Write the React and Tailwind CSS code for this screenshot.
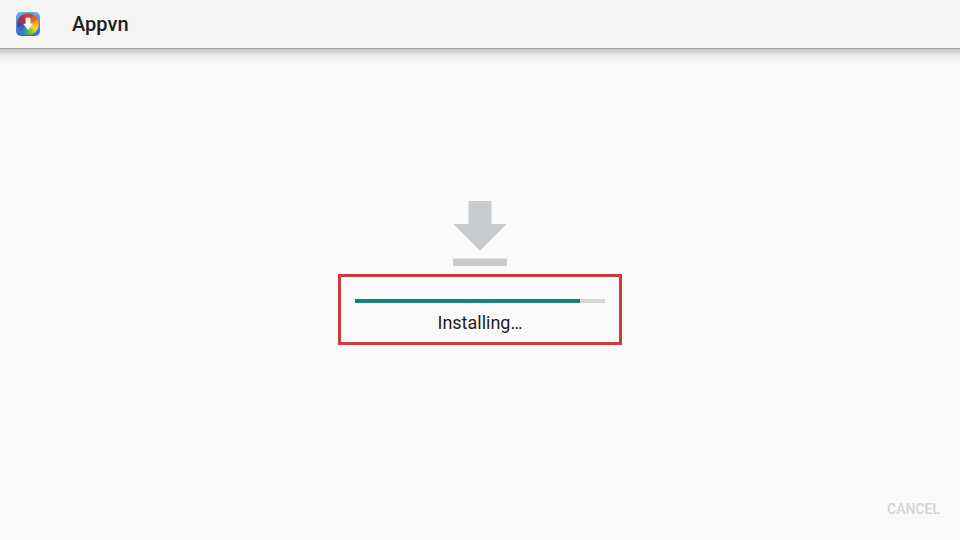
import { useState } from 'react'

function AppvnIcon() {
  return (
    <svg viewBox="0 0 24 24" className="size-6" aria-hidden="true">
      <defs>
        <linearGradient id="tile" x1="0" y1="0" x2="0" y2="1">
          <stop offset="0" stopColor="#5cb4e6" />
          <stop offset="1" stopColor="#3c69cc" />
        </linearGradient>
        <clipPath id="wheel">
          <circle cx="12" cy="12" r="10.8" />
        </clipPath>
        <filter id="blend" x="-20%" y="-20%" width="140%" height="140%">
          <feGaussianBlur stdDeviation="0.9" />
        </filter>
      </defs>
      <rect width="24" height="24" rx="5" fill="url(#tile)" />
      <g clipPath="url(#wheel)">
        <g filter="url(#blend)">
          <path d="M12 12 2-4h18z" fill="#d43a34" />
          <path d="M12 12 20-4l8 11z" fill="#e4602c" />
          <path d="M12 12 28 5v9z" fill="#f0a024" />
          <path d="M12 12 28 14l-6 12z" fill="#ecd92e" />
          <path d="M12 12 22 26h-9z" fill="#8cc832" />
          <path d="M12 12 14 28H6z" fill="#3fae4a" />
          <path d="M12 12 7 28l-7-4z" fill="#2a93b8" />
          <path d="M12 12 0 25l-6-8z" fill="#3a5fc4" />
          <path d="M12 12-6 18V8z" fill="#5b35a0" />
          <path d="M12 12-6 9 3-4z" fill="#a8304e" />
        </g>
      </g>
      <path d="M9.6 5.8h4.8v6h2.5L12 18.2l-4.9-6.4h2.5z" fill="#fff" />
    </svg>
  )
}

function DownloadGlyph() {
  return (
    <svg viewBox="0 0 54 65" className="h-[65px] w-[54px]" fill="#c7cbce" aria-hidden="true">
      <path d="M15.5 0h23v23h15L27 49.5.5 23h15z" />
      <path d="M0 57.5h54V65H0z" />
    </svg>
  )
}

export default function App() {
  const [progress] = useState(90)

  return (
    <div className="flex min-h-screen flex-col bg-[#fafafa] font-['Roboto',sans-serif] text-[#212121]">
      <header className="flex h-12 items-center gap-8 bg-[#f5f5f5] px-4">
        <AppvnIcon />
        <h1 className="text-xl leading-6 font-medium">Appvn</h1>
      </header>
      <div className="-mb-4 h-4 border-t border-[#a0a0a0] bg-linear-to-b from-[#c6c6c6] via-[#ededed] via-50% to-[#fafafa]" />

      <main className="flex flex-1 flex-col items-center justify-center gap-2">
        <DownloadGlyph />
        <div className="flex flex-col items-center gap-2 border-3 border-[#d03a3c] px-3.5 pt-[22px] pb-[7px]">
          <progress
            id="install-progress"
            max="100"
            value={progress}
            className="block h-1 w-[250px] appearance-none bg-[#d6d6d6] [&::-webkit-progress-bar]:bg-[#d6d6d6] [&::-webkit-progress-value]:bg-[#0f8577]"
          />
          <label htmlFor="install-progress" className="text-lg leading-6">
            Installing…
          </label>
        </div>
      </main>

      <footer className="flex justify-end px-5 pb-5">
        <button type="button" disabled className="text-sm leading-[22px] font-medium text-[#d4d4d4]">
          CANCEL
        </button>
      </footer>
    </div>
  )
}
